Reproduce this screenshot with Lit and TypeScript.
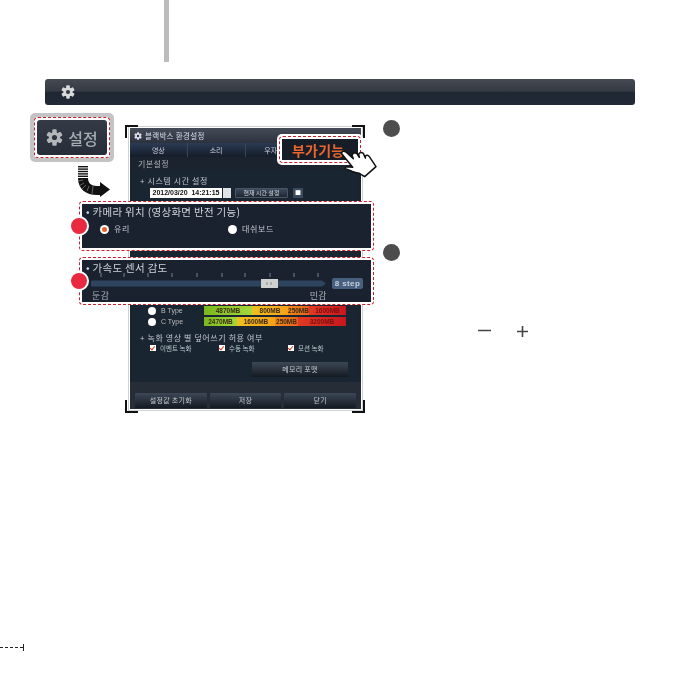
import { LitElement, html, css, svg } from "lit";
import { customElement } from "lit/decorators.js";

const gear = (size: number, color: string, hole: string) => html`<svg class="gear" width=${size} height=${size} viewBox="-10 -10 20 20">
  ${[0, 60, 120, 180, 240, 300].map((a) => svg`<rect x="-2.6" y="-9.6" width="5.2" height="6" rx="1.4" fill=${color} transform="rotate(${a})"></rect>`)}
  <circle r="6.6" fill=${color}></circle>
  <circle r="3" fill=${hole}></circle>
</svg>`;

@customElement("app-root")
export class AppRoot extends LitElement {
  static styles = css`
    :host { display: block; width: 680px; height: 680px; background: #fff; overflow: hidden;
      font-family: "Noto Sans CJK KR", "Noto Sans", sans-serif; }
    .page { position: relative; width: 680px; height: 680px; display: flex; flex-direction: column; }
    .rule { width: 5px; height: 62px; margin-left: 164px; background: #bcbcbc; flex: none; }
    .header { margin: 17px 45px 0; height: 26px; border-radius: 3px; flex: none; padding-left: 16px; display: flex; align-items: center;
      background: linear-gradient(#454a52 0, #353a43 46%, #1f2733 52%, #222a37 100%); }
    .header .gear { margin-top: -1px; filter: blur(.3px); }
    .abs { position: absolute; }

    .settings { left: 30px; top: 113px; width: 84px; height: 49px; box-sizing: border-box; background: #c4c4c4; border-radius: 5px; padding: 4px; }
    .settings-in { height: 100%; box-sizing: border-box; border: 1.5px dashed #c8202c; border-radius: 4px; padding: 2px; background: #fff; }
    .settings-btn { height: 100%; border-radius: 3px; background: linear-gradient(#343b47, #262d39); display: flex; align-items: center; justify-content: center; gap: 5px;
      color: #a6abb1; font-size: 16px; font-weight: 500; line-height: 1; filter: blur(.3px); }

    .arrow { left: 76px; top: 165px; }

    .shot { left: 125px; top: 125px; width: 240px; height: 288px; }
    .corner { position: absolute; width: 11px; height: 11px; border: 0 solid #111; }
    .tl { left: 0; top: 0; border-width: 2px 0 0 2px; }
    .tr { right: 0; top: 0; border-width: 2px 2px 0 0; }
    .bl { left: 0; bottom: 0; border-width: 0 0 2px 2px; }
    .br { right: 0; bottom: 0; border-width: 0 2px 2px 0; }
    .win { position: absolute; left: 3px; top: 1px; right: 2px; bottom: 2px; border: 1px solid #cfd2d4; padding: 1px; background: #fff; }
    .win-in { height: 100%; background: #1b232e; display: flex; flex-direction: column; filter: blur(0.35px); color: #d6d9dc; font-size: 7px; line-height: 1; overflow: hidden; }
    .title { height: 15px; flex: none; display: flex; align-items: center; gap: 3px; padding-left: 4px; background: linear-gradient(#454c57, #2b323d); color: #dde; font-size: 7.5px; letter-spacing: .3px; }
    .tabs { height: 14px; flex: none; display: flex; background: linear-gradient(#2b3b54, #141c29); }
    .tabs span { flex: 1; text-align: center; line-height: 14px; border-right: 1px solid #3a4656; color: #ccd; }
    .section { height: 13px; flex: none; display: flex; align-items: center; padding-left: 8px; color: #aeb4ba; font-size: 8px; letter-spacing: .4px; }
    .panel { flex: 1; min-height: 0; margin: 0 3px 0; background: #1a2532; padding: 0 0 0 7px; display: flex; flex-direction: column; }
    .h { font-size: 8px; color: #c2c7cc; letter-spacing: .6px; padding-top: 7px; }
    .time-row { display: flex; align-items: center; margin: 2px 0 0 10px; height: 11px; }
    .time { width: 72px; height: 10px; background: #fff; color: #111; text-align: center; font: 700 7px/10px "Liberation Sans", sans-serif; }
    .spin { width: 8px; height: 10px; background: #dfe3e6; margin-left: 1px; }
    .mini { height: 10px; width: 53px; background: linear-gradient(#3c4a5f, #1d2632); border: 1px solid #4a5666; box-sizing: border-box; border-radius: 1px; text-align: center; line-height: 8px; font-size: 6px; margin-left: 4px; }
    .lock { width: 10px; height: 10px; margin-left: 5px; background: #3c4a5f; color: #fff; font-size: 6px; display: flex; align-items: center; justify-content: center; }
    .gap { height: 107px; flex: none; }
    .mem { display: flex; align-items: center; height: 11px; font: 7px/1 "Liberation Sans", sans-serif; color: #bbb; }
    .dot { width: 8px; height: 8px; border-radius: 50%; background: #fff; margin: 0 5px 0 8px; flex: none; }
    .mem .lbl { width: 43px; }
    .bar { display: flex; width: 142px; height: 9px; font: 700 6.5px/9px "Liberation Sans", sans-serif; color: #3a2a10; text-align: center; }
    .bar i { font-style: normal; display: block; }
    .g { background: linear-gradient(90deg, #78b81e, #a6d83a); }
    .y { background: linear-gradient(90deg, #f0c020, #f7a21a); }
    .o { background: linear-gradient(90deg, #f08a1a, #e8601c); }
    .r { background: linear-gradient(90deg, #e03a24, #c8161e); color: #7a1010; }
    .checks { display: flex; margin: 2px 0 0 10px; height: 8px; align-items: center; }
    .chk { width: 69px; display: flex; align-items: center; gap: 4px; font-size: 6.5px; color: #bcc; }
    .chk b { width: 6px; height: 6px; background: #fff; flex: none; position: relative; }
    .chk b::after { content: ""; position: absolute; left: 1px; top: 0; width: 2px; height: 4px; border: solid #d9401c; border-width: 0 1.5px 1.5px 0; transform: rotate(40deg); }
    .h2 { padding-top: 7px; }
    .fmt-row { display: flex; justify-content: flex-end; padding: 10px 10px 0 0; }
    .btn { height: 15px; background: linear-gradient(#3d4856, #141a22); border-radius: 1px; text-align: center; line-height: 15px; color: #c6cbd0; font-size: 7px; letter-spacing: .3px; }
    .fmt { width: 96px; }
    .foot { height: 26px; flex: none; background: #262d37; display: flex; gap: 3px; align-items: flex-end; padding: 0 5px 1px 5px; }
    .foot .btn { flex: 1; }

    .callout { left: 277px; top: 134px; width: 86px; height: 31px; box-sizing: border-box; background: #fff; border-radius: 5px; padding: 2px; }
    .callout-in { height: 100%; box-sizing: border-box; border: 1px dashed #c8202c; border-radius: 4px; padding: 2px; }
    .callout-btn { height: 100%; background: #161d27; color: #e9662e; font-size: 14px; font-weight: 700; display: flex; align-items: center; padding-left: 10px; line-height: 1; letter-spacing: .2px; filter: blur(.3px); }
    .hand { left: 336px; top: 144px; }

    .ov { left: 79px; width: 295px; box-sizing: border-box; background: #fff; border: 1px dashed #c8202c; border-radius: 4px; padding: 2px; }
    .ov-in { height: 100%; background: #1a2230; box-sizing: border-box; color: #d2d6da; position: relative; filter: blur(.3px); }
    .ov1 { top: 201px; height: 50px; }
    .ov2 { top: 257px; height: 48px; }
    .ov-t { font-size: 10.5px; line-height: 1; letter-spacing: .3px; padding: 3px 0 0 4px; white-space: nowrap; color: #cfd3d7; }
    .radios { display: flex; padding: 7px 0 0 18px; font-size: 8px; letter-spacing: .6px; line-height: 1; color: #c6cace; }
    .radio { width: 128px; display: flex; align-items: center; gap: 5px; }
    .radio b { width: 9px; height: 9px; border-radius: 50%; background: #fff; flex: none; display: flex; align-items: center; justify-content: center; }
    .radio b.on::after { content: ""; width: 5px; height: 5px; border-radius: 50%; background: #e8622c; }
    .slide-row { display: flex; align-items: center; gap: 5px; padding: 3px 0 0 9px; height: 17px; box-sizing: border-box; }
    .slide { position: relative; width: 236px; height: 9px; flex: none; }
    .ends { display: flex; justify-content: space-between; width: 235px; margin-left: 10px; font-size: 9px; line-height: 1; color: #aeb4ba; letter-spacing: .4px; }
    .stepb { width: 31px; height: 11px; background: #47607f; color: #c4d0dc; border-radius: 2px; font: 700 8px/11px "Liberation Sans", sans-serif; text-align: center; letter-spacing: .4px; }

    .pin { width: 16px; height: 16px; border-radius: 50%; background: #e8293f; border: 2px solid #fff; box-sizing: content-box; left: 69px; }
    .num { width: 17px; height: 17px; border-radius: 50%; background: #4d4d4d; left: 383px; }
    .op { stroke: #454545; stroke-width: 1.6; }
    .crop { left: 0; top: 644px; }
  `;

  render() {
    const ticks = [101, 124, 148, 172, 197, 222, 245, 270, 294, 318];
    return html`<div class="page">
      <div class="rule"></div>
      <div class="header">${gear(14, "#d8dadc", "#343a44")}</div>

      <div class="abs settings"><div class="settings-in"><div class="settings-btn">${gear(17, "#b4b7ba", "#2d3440")}<span>설정</span></div></div></div>

      <svg class="abs arrow" width="36" height="34" viewBox="0 0 36 34">
        <g fill="#111">
          ${[1, 3.4, 5.8, 8.2, 10.6].map((y) => svg`<rect x="2" y=${y} width="10" height="1.4"></rect>`)}
          <path d="M2 13h10c0 5 3 8 9 8h3v-4l10 7.5L24 32v-2h-3C10 30 2 24 2 13z"></path>
        </g>
        <g stroke="#999" stroke-width=".6"><path d="M7 15l-5 1M8 18l-5 3M10 20l-4 4M13 21l-2 5M17 21l-1 8"></path></g>
      </svg>

      <div class="abs shot">
        <div class="win"><div class="win-in">
          <div class="title">${gear(8, "#dde", "#333")}<span>블랙박스 환경설정</span></div>
          <div class="tabs"><span>영상</span><span>소리</span><span>우자막</span><span></span></div>
          <div class="section">기본설정</div>
          <div class="panel">
            <div class="h">+ 시스템 시간 설정</div>
            <div class="time-row"><div class="time">2012/03/20&nbsp; 14:21:15</div><div class="spin"></div><div class="mini">현재 시간 설정</div><div class="lock">■</div></div>
            <div class="gap"></div>
            <div class="mem"><i class="dot"></i><span class="lbl">B Type</span><div class="bar"><i class="g" style="width:48px">4870MB</i><i class="y" style="width:36px">800MB</i><i class="o" style="width:21px">250MB</i><i class="r" style="width:37px">1600MB</i></div></div>
            <div class="mem"><i class="dot"></i><span class="lbl">C Type</span><div class="bar"><i class="g" style="width:33px">2470MB</i><i class="y" style="width:38px">1600MB</i><i class="o" style="width:23px">250MB</i><i class="r" style="width:48px">3200MB</i></div></div>
            <div class="h h2">+ 녹화 영상 별 덮어쓰기 허용 여부</div>
            <div class="checks"><div class="chk"><b></b>이벤트 녹화</div><div class="chk"><b></b>수동 녹화</div><div class="chk"><b></b>모션 녹화</div></div>
            <div class="fmt-row"><div class="btn fmt">메모리 포맷</div></div>
          </div>
          <div class="foot"><div class="btn">설정값 초기화</div><div class="btn">저장</div><div class="btn">닫기</div></div>
        </div></div>
        <i class="corner tl"></i><i class="corner tr"></i><i class="corner bl"></i><i class="corner br"></i>
      </div>

      <div class="abs callout"><div class="callout-in"><div class="callout-btn">부가기능</div></div></div>
      <svg class="abs hand" width="46" height="38" viewBox="0 0 138 114">
        <path d="M16 28Q20 18 30 24L52 44 48 34Q52 24 62 28L70 40 68 30Q74 22 82 28L88 42 88 36Q94 30 100 38L120 68 86 98 70 88Q50 84 44 80L28 74Q26 68 34 68L50 70Z" fill="#fff" stroke="#111" stroke-width="4.5" stroke-linejoin="round"></path>
      </svg>

      <div class="abs ov ov1"><div class="ov-in">
        <div class="ov-t">• 카메라 위치 (영상화면 반전 기능)</div>
        <div class="radios"><div class="radio"><b class="on"></b>유리</div><div class="radio"><b></b>대쉬보드</div></div>
      </div></div>

      <div class="abs ov ov2"><div class="ov-in">
        <div class="ov-t">• 가속도 센서 감도</div>
        <div class="slide-row">
          <svg class="slide" viewBox="0 0 236 9" width="236" height="9">
            <path d="M2 1.5h229l4 3-4 3H2a3 3 0 0 1 0-6z" fill="#2f445f"></path>
            <rect x="170" y="0" width="17" height="9" fill="#d0d2d2"></rect>
            <path d="M176 3v3M180 3v3" stroke="#888" stroke-width="1"></path>
          </svg>
          <div class="stepb">8 step</div>
        </div>
        <div class="ends"><span>둔감</span><span>민감</span></div>
      </div></div>
      <svg class="abs" style="left:90px;top:273px" width="240" height="5" viewBox="90 273 240 5">
        ${ticks.map((x) => svg`<path d="M${x} 273v4" stroke="#77808c" stroke-width="1"></path>`)}
      </svg>

      <div class="abs pin" style="top:216px"></div>
      <div class="abs pin" style="top:271px"></div>
      <div class="abs num" style="top:120px"></div>
      <div class="abs num" style="top:244px"></div>

      <svg class="abs" style="left:478px;top:324px" width="52" height="14" viewBox="0 0 52 14">
        <path class="op" d="M0 6.5h13M39 7.5h11M44.5 2v11"></path>
      </svg>

      <svg class="abs crop" width="26" height="8" viewBox="0 0 26 8">
        <path d="M0 3.5H23" stroke="#222" stroke-width="1" stroke-dasharray="3 2"></path>
        <path d="M23.5 0v7" stroke="#222" stroke-width="1"></path>
      </svg>
    </div>`;
  }
}
